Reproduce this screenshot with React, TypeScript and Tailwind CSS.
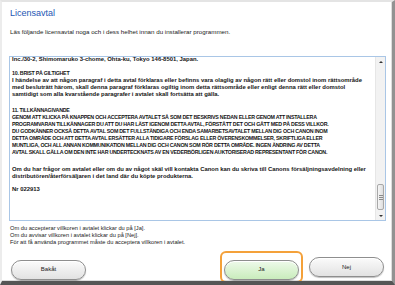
const termsTop = ['Inc./30-2, Shimomaruko 3-chome, Ohta-ku, Tokyo 146-8501, Japan.'];

const invalidityBody = [
  'I händelse av att någon paragraf i detta avtal förklaras eller befinns vara olaglig av någon rätt eller domstol inom rättsområde',
  'med besluträtt härom, skall denna paragraf förklaras ogiltig inom detta rättsområde eller enligt denna rätt eller domstol',
  'samtidigt som alla kvarstående paragrafer i avtalet skall fortsätta att gälla.',
];

const noticeBody = [
  'GENOM ATT KLICKA PÅ KNAPPEN OCH ACCEPTERA AVTALET SÅ SOM DET BESKRIVS NEDAN ELLER GENOM ATT INSTALLERA',
  'PROGRAMVARAN TILLKÄNNAGER DU ATT DU HAR LÄST IGENOM DETTA AVTAL, FÖRSTÅTT DET OCH GÅTT MED PÅ DESS VILLKOR.',
  'DU GODKÄNNER OCKSÅ DETTA AVTAL SOM DET FULLSTÄNDIGA OCH ENDA SAMARBETSAVTALET MELLAN DIG OCH CANON INOM',
  'DETTA OMRÅDE OCH ATT DETTA AVTAL ERSÄTTER ALLA TIDIGARE FÖRSLAG ELLER ÖVERENSKOMMELSER, SKRIFTLIGA ELLER',
  'MUNTLIGA, OCH ALL ANNAN KOMMUNIKATION MELLAN DIG OCH CANON SOM RÖR DETTA OMRÅDE. INGEN ÄNDRING AV DETTA',
  'AVTAL SKALL GÄLLA OM DEN INTE HAR UNDERTECKNATS AV EN VEDERBÖRLIGEN AUKTORISERAD REPRESENTANT FÖR CANON.',
];

const questions = [
  'Om du har frågor om avtalet eller om du av något skäl vill kontakta Canon kan du skriva till Canons försäljningsavdelning eller',
  'distributören/återförsäljaren i det land där du köpte produkterna.',
];

// caps lines are set narrower, the original font has slim capitals
const caps = 'text-[5.3px] tracking-[-0.25px]';

function Lines({ lines, className = '' }: { lines: string[]; className?: string }) {
  return (
    <div className={className}>
      {lines.map((l) => (
        <div key={l}>{l}</div>
      ))}
    </div>
  );
}

function PillButton({ label, green = false }: { label: string; green?: boolean }) {
  return (
    <button
      className={`w-[75px] h-[20px] rounded-full border border-[#8e8e8e] text-[6px] text-[#222] shadow-[inset_0_1px_0_#ffffff,0_1px_1px_rgba(0,0,0,0.25)] ${
        green ? 'bg-gradient-to-b from-[#eefaea] to-[#c9ecbc]' : 'bg-gradient-to-b from-[#fbfbfb] to-[#e2e2e2]'
      }`}
    >
      {label}
    </button>
  );
}

export default function App() {
  return (
    <div className="w-[395px] h-[285px] bg-white flex flex-col overflow-hidden border-t-2 border-l-2 border-r-[3px] border-b-[4px] border-t-[#e4e4e4] border-l-[#ececec] border-r-[#929292] border-b-[#555555] font-['Liberation_Sans',Arial,sans-serif]">
      <div className="flex-1 flex flex-col pl-[7px] pr-[5px] border-r border-b border-[#dddddd]">
        {/* Header */}
        <h1 className="pl-[1px] pt-[6px] text-[9px] leading-[11px] text-[#2456b4]">Licensavtal</h1>
        <p className="pl-[1px] mt-[8.5px] text-[6.2px] leading-[8px] text-[#222]">
          Läs följande licensavtal noga och i dess helhet innan du installerar programmen.
        </p>

        {/* Agreement box */}
        <div className="mt-[20.5px] h-[165px] flex border border-[#a9c6e6]">
          <div className="flex-1 overflow-hidden pl-[2px]">
            <div className="-mt-[1.5px] text-[5.9px] leading-[7px] font-bold text-[#151515] whitespace-nowrap">
              <Lines lines={termsTop} />
              <div className={`mt-[7px] ${caps}`}>10. BRIST PÅ GILTIGHET</div>
              <Lines lines={invalidityBody} />
              <div className={`mt-[9px] ${caps}`}>11. TILLKÄNNAGIVANDE</div>
              <Lines lines={noticeBody} className={caps} />
              <Lines lines={questions} className="mt-[10px]" />
              <Lines lines={['Nr 022913']} className="mt-[6px]" />
            </div>
          </div>
          <div className="w-[10px] flex flex-col bg-[#f2f2f2] border-l border-[#e6e6e6]">
            <div className="h-[9px] flex items-center justify-center">
              <div className="w-0 h-0 border-l-[2px] border-r-[2px] border-b-[2px] border-l-transparent border-r-transparent border-b-[#333]" />
            </div>
            <div className="flex-1 flex flex-col justify-end pb-[1px]">
              <div className="mx-[1px] h-[26px] rounded-[2px] border border-[#a8a8a8] bg-gradient-to-r from-[#f6f6f6] to-[#dedede] flex flex-col items-center justify-center gap-[1px]">
                <div className="w-[4px] h-px bg-[#8a8a8a]" />
                <div className="w-[4px] h-px bg-[#8a8a8a]" />
                <div className="w-[4px] h-px bg-[#8a8a8a]" />
              </div>
            </div>
            <div className="h-[9px] flex items-center justify-center">
              <div className="w-0 h-0 border-l-[2px] border-r-[2px] border-t-[2px] border-l-transparent border-r-transparent border-t-[#333]" />
            </div>
          </div>
        </div>

        {/* Instructions */}
        <div className="pl-[1px] mt-[4px] text-[5.7px] leading-[7px] text-[#222] whitespace-nowrap">
          <div>Om du accepterar villkoren i avtalet klickar du på [Ja].</div>
          <div>Om du avvisar villkoren i avtalet klickar du på [Nej].</div>
          <div>För att få använda programmet måste du acceptera villkoren i avtalet.</div>
        </div>

        {/* Buttons */}
        <div className="mt-[8px] h-[26px] flex items-center">
          <div className="ml-[2px]">
            <PillButton label="Bakåt" />
          </div>
          <div className="ml-auto flex items-center gap-[6px] mr-[2px]">
            <div className="px-[2px] py-[1px] border-2 border-[#f4a13a] rounded-[6px]">
              <PillButton label="Ja" green />
            </div>
            <PillButton label="Nej" />
          </div>
        </div>
      </div>
    </div>
  );
}
